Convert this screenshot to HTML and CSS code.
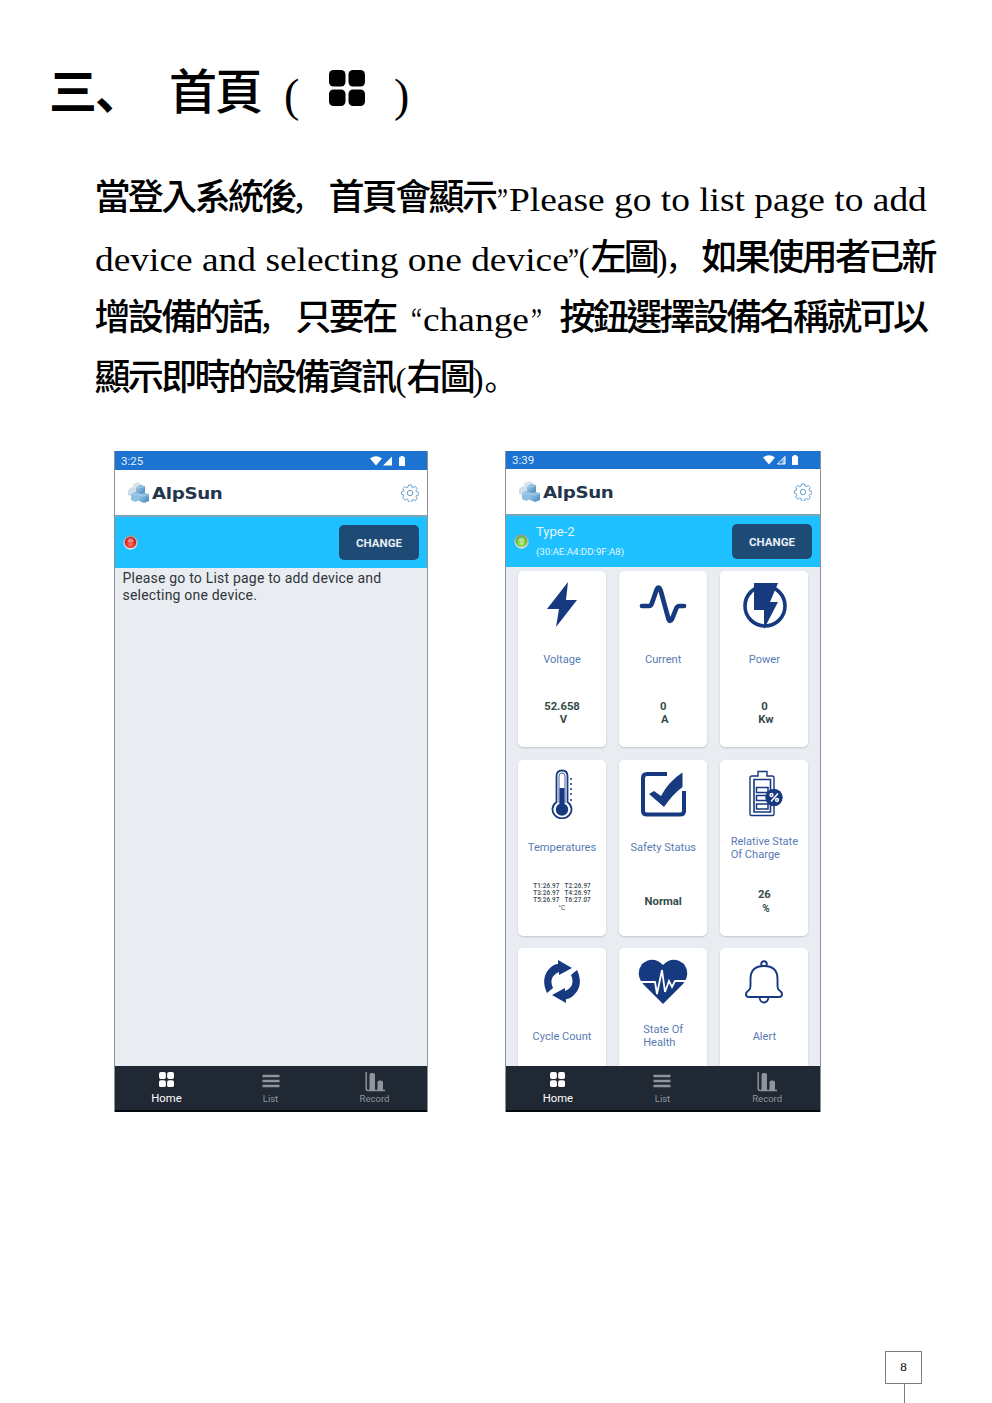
FILE: index.html
```html
<!DOCTYPE html>
<html lang="zh-Hant">
<head>
<meta charset="utf-8">
<title>首頁</title>
<link rel="stylesheet" href="styles.css">
</head>
<body>
<svg class="defs" width="0" height="0">
  <defs>
    <linearGradient id="cube" x1="0" y1="0" x2="1" y2="1"><stop offset="0" stop-color="#a9cfe9"/><stop offset="1" stop-color="#3f86bd"/></linearGradient>
    <radialGradient id="red" cx=".5" cy=".65"><stop offset="0" stop-color="#ff7a6e"/><stop offset="1" stop-color="#d31216"/></radialGradient>
    <radialGradient id="green" cx=".5" cy=".65"><stop offset="0" stop-color="#c6f58a"/><stop offset="1" stop-color="#57b52a"/></radialGradient>
    <linearGradient id="rim" x1="0" y1="0" x2="0" y2="1"><stop offset="0" stop-color="#8a9aa2"/><stop offset="1" stop-color="#e3e8ea"/></linearGradient>
  </defs>
  <symbol id="cubes" viewBox="0 0 22 21">
    <path d="M5 2l5-2 4 2v6l-9 1z" fill="#dbe4eb"/><path d="M0 8l4-3 5 2v6l-4 2-5-2z" fill="#cfdfea"/>
    <path d="M8 5l4-2 5 1v7l-5 2-4-2z" fill="url(#cube)"/><path d="M3 12l4-2 5 2v6l-5 2-4-2z" fill="#8fbfe0"/>
    <path d="M11 13l5-2 5 1v7l-5 2-5-2z" fill="url(#cube)"/>
    <path d="M8 5l4 1 5-2M3 12l4 1 5-1M11 13l5 1 5-2" stroke="#b5d8ee" stroke-width=".7" fill="none"/>
  </symbol>
  <symbol id="gear" viewBox="0 0 18 18">
    <g fill="none" stroke="#68a2d0" stroke-width="1" stroke-linejoin="round">
      <path d="M7.500 1h3l.5 2.200 1.300.5 1.900-1.200 2.100 2.100-1.200 1.900.5 1.300 2.200.5v2.600l-2.200.5-.5 1.300 1.200 1.900-2.100 2.100-1.900-1.200-1.300.5-.5 2.200h-3L7 15.500l-1.300-.5-1.900 1.200-2.100-2.100 1.200-1.900-.5-1.300L.5 10.400V7.800l1.900-.5.5-1.300L1.700 4.600l2.100-2.100 1.900 1.200L7 3.200z"/>
      <circle cx="9" cy="9" r="2.700"/>
    </g>
  </symbol>
  <symbol id="grid" viewBox="0 0 36 36">
    <rect width="16.500" height="16.500" rx="4.500"/><rect x="19.500" width="16.500" height="16.500" rx="4.500"/><rect y="19.500" width="16.500" height="16.500" rx="4.500"/><rect x="19.500" y="19.500" width="16.500" height="16.500" rx="4.500"/>
  </symbol>
  <symbol id="list" viewBox="0 0 18 14"><path d="M.5 2h17M.5 7h17M.5 12h17" stroke="currentColor" stroke-width="2.500"/></symbol>
  <symbol id="bars" viewBox="0 0 20 20"><path d="M1.200 0v16.500q0 2 2 2H20" fill="none" stroke="currentColor" stroke-width="1.500"/><path d="M4.500 18V3q0-2 2-2h1.500q2 0 2 2v15zM12.500 18v-7.500q0-2 2-2H16q2 0 2 2V18z" fill="currentColor"/></symbol>
</svg>

<main class="page">
  <h1 class="title">
    <span class="num" lang="zh-Hans">三、</span><span class="name">首頁</span><span class="open">(</span>
    <svg class="title-icon"><use href="#grid"/></svg><span class="close">)</span>
  </h1>

  <div class="intro">
    <p class="line"><span class="han w201">當登入系統後</span><span class="stop w33" lang="zh-Hans">，</span><span class="han w168">首頁會顯示</span><span class="lat quote slim w12">”</span><span class="lat">Please go to list page to add</span></p>
    <p class="line"><span class="lat w473">device and selecting one device</span><span class="lat quote slim w11">”</span><span class="lat quote w12">(</span><span class="han w66">左圖</span><span class="lat quote w9">)</span><span class="stop near w36" lang="zh-Hans">，</span><span class="han">如果使用者已新</span></p>
    <p class="line"><span class="han w168">增設備的話</span><span class="stop w33" lang="zh-Hans">，</span><span class="han w115">只要在</span><span class="lat quote slim w12">“</span><span class="lat w108">change</span><span class="lat quote slim w30">”</span><span class="han">按鈕選擇設備名稱就可以</span></p>
    <p class="line"><span class="han w301">顯示即時的設備資訊</span><span class="lat quote w11">(</span><span class="han w66">右圖</span><span class="lat quote w12">)</span><span class="stop near" lang="zh-Hans">。</span></p>
  </div>

  <div class="phones">
    <section class="phone left">
      <div class="status"><span>3:25</span>
        <svg width="36" height="10" viewBox="0 0 36 10"><path d="M0 2.500Q6-2 12 2.500L6 9.500zM13 9.500l9-9v9zM29 1.200h1.500V0h3v1.200H35v8.800h-6z" fill="#fff"/></svg></div>
      <header class="brand"><svg width="22" height="21"><use href="#cubes"/></svg><span class="logo">AlpSun</span><svg class="gear" width="18" height="18"><use href="#gear"/></svg></header>
      <div class="device"><svg width="15" height="15" viewBox="0 0 15 15"><circle cx="7.500" cy="7.500" r="7.200" fill="url(#rim)"/><circle cx="7.500" cy="7.500" r="5.600" fill="url(#red)"/><path d="M4.500 4.500q3-2.500 6 0V7h-6z" fill="#fff" opacity=".4"/></svg><span class="change">CHANGE</span></div>
      <p class="message">Please go to List page to add device and<br>selecting one device.</p>
      <nav class="tabs"><span class="tab on"><svg width="15" height="15"><use href="#grid"/></svg>Home</span><span class="tab"><svg class="lines" width="18" height="14"><use href="#list"/></svg>List</span><span class="tab"><svg width="20" height="20"><use href="#bars"/></svg>Record</span></nav>
    </section>

    <section class="phone right">
      <div class="status"><span>3:39</span>
        <svg width="36" height="10" viewBox="0 0 36 10"><path d="M0 2.500Q6-2 12 2.500L6 9.500zM29 1.200h1.500V0h3v1.200H35v8.800h-6z" fill="#fff"/><path d="M14.500 9l7.500-7.500V9z" fill="none" stroke="#fff"/><path d="M19 4.500L22 1.500V9h-3z" fill="#fff" opacity=".5"/></svg></div>
      <header class="brand"><svg width="22" height="21"><use href="#cubes"/></svg><span class="logo">AlpSun</span><svg class="gear" width="18" height="18"><use href="#gear"/></svg></header>
      <div class="device"><svg width="15" height="15" viewBox="0 0 15 15"><circle cx="7.500" cy="7.500" r="7.200" fill="url(#rim)"/><circle cx="7.500" cy="7.500" r="5.600" fill="url(#green)"/><path d="M4.500 4.500q3-2.500 6 0V7h-6z" fill="#fff" opacity=".4"/></svg><span class="info"><span class="type">Type-2</span><span class="mac">(30:AE:A4:DD:9F:A8)</span></span><span class="change">CHANGE</span></div>
      <div class="cards">
        <article class="card"><div class="icon"><svg width="50" height="50" viewBox="0 0 50 50"><path d="M31 2L10 29h12l-3 18 21-27H29z" fill="#16397f"/></svg></div><div class="label">Voltage</div><div class="value"><span>52.658</span><span class="unit">V</span></div></article>
        <article class="card"><div class="icon"><svg width="50" height="50" viewBox="0 0 50 50"><path d="M4 26h7q2 0 3-3l4.500-13q2-5 4 0l8 29q1.500 4 3.500 0l4-10q1-3 3.500-3H46" fill="none" stroke="#16397f" stroke-width="4.700" stroke-linecap="round"/></svg></div><div class="label">Current</div><div class="value"><span>0</span><span class="unit">A</span></div></article>
        <article class="card"><div class="icon"><svg width="50" height="50" viewBox="0 0 50 50"><circle cx="26" cy="26" r="20" fill="none" stroke="#16397f" stroke-width="3.600"/><path d="M15 3h24l-8 19h8L25 49V30H15z" fill="#16397f"/></svg></div><div class="label">Power</div><div class="value"><span>0</span><span class="unit">Kw</span></div></article>
        <article class="card"><div class="icon"><svg width="50" height="50" viewBox="0 0 50 50"><g fill="none" stroke="#16397f"><path d="M19.500 33V7q0-5.500 5.500-5.500T30.500 7v26A9.500 9 0 1 1 19.500 33z" stroke-width="1.800"/><path d="M22 34V7q0-3 3-3t3 3v27" stroke-width=".8"/><path d="M25 19v21" stroke-width="5"/><path d="M33 10h2M33 15h2M33 20h2M33 25h2M33 31h2" stroke-width="1.500"/></g><circle cx="25" cy="40.500" r="6.200" fill="#16397f"/></svg></div><div class="label">Temperatures</div><div class="value temps"><span>T1:26.97&nbsp;&nbsp; T2:26.97</span><span>T3:26.97&nbsp;&nbsp; T4:26.97</span><span>T5:26.97&nbsp;&nbsp; T6:27.07</span><span class="deg">°C</span></div></article>
        <article class="card"><div class="icon"><svg width="50" height="50" viewBox="0 0 50 50"><path d="M29 5H9Q5 5 5 9v33q0 3.500 4 3.500h33q4 0 4-3.500V22" fill="none" stroke="#16397f" stroke-width="4"/><path d="M11 25l5-3 7 5Q31 12 44.500 3.500V18Q35 25 26 38z" fill="#16397f"/></svg></div><div class="label">Safety Status</div><div class="value"><span>Normal</span></div></article>
        <article class="card"><div class="icon"><svg width="50" height="50" viewBox="0 0 50 50"><g fill="none" stroke="#16397f"><path d="M19 7V2.500h9V7h5q2 0 2 2v36q0 1.500-1.500 1.500h-21Q11 46.500 11 45V9q0-2 2-2z" stroke-width="1.400"/><path d="M15 10.500h16.500V43H15z" stroke-width="1.600"/><path d="M17.500 18.500H29v5H17.500zM17.500 26.500H29v5H17.500zM17.500 35H29v5H17.500z" stroke-width="1.500"/></g><circle cx="35" cy="28.500" r="8.700" fill="#16397f"/><g fill="none" stroke="#fff" stroke-width="1.500"><path d="M32 32.500l7-8"/><circle cx="32.500" cy="26" r="1.400"/><circle cx="38" cy="31" r="1.400"/></g></svg></div><div class="label two">Relative State<br>Of Charge</div><div class="value"><span>26</span><span class="unit percent">%</span></div></article>
        <article class="card"><div class="icon"><svg width="50" height="50" viewBox="0 0 50 50"><g fill="#16397f"><path id="turn" d="M10 36Q3 21 13 11q4-4 8-4V3l14 8-13 7v-3Q11 20 16 31z"/><use href="#turn" transform="rotate(180 25 24.500)"/></g></svg></div><div class="label">Cycle Count</div></article>
        <article class="card"><div class="icon"><svg width="50" height="50" viewBox="0 0 50 50"><path d="M25 47L5 27Q-3 17 4 7 15-2 25 8 35-2 46 7 53 17 45 27z" fill="#16397f"/><path d="M1 25h16l2 12 5-24 3 22 4-11 3 6 3-6h12" fill="none" stroke="#fff" stroke-width="1.800"/></svg></div><div class="label two">State Of<br>Health</div></article>
        <article class="card"><div class="icon"><svg width="50" height="50" viewBox="0 0 50 50"><g fill="#fff" stroke="#16397f" stroke-width="1.900"><circle cx="25" cy="7" r="2.800"/><path d="M20.500 40a4.500 5.500 0 0 0 9 0z"/><path d="M10 40q-3 0-3-2.800 0-2.200 3-4.200 1.500-1 1.500-5.500V22q0-13 13.500-13t13.500 13v5.500q0 4.500 1.500 5.500 3 2 3 4.200 0 2.800-3 2.800z"/></g></svg></div><div class="label">Alert</div></article>
      </div>
      <nav class="tabs"><span class="tab on"><svg width="15" height="15"><use href="#grid"/></svg>Home</span><span class="tab"><svg class="lines" width="18" height="14"><use href="#list"/></svg>List</span><span class="tab"><svg width="20" height="20"><use href="#bars"/></svg>Record</span></nav>
    </section>
  </div>

  <footer class="folio"><span class="number">8</span><span class="stem"></span></footer>
</main>
</body>
</html>
```
FILE: styles.css
```css
* { box-sizing: border-box; }
body { margin: 0; background: #fff; color: #000; }
p, h1 { margin: 0; }
svg { display: block; flex: none; }
.defs { position: absolute; }
.page { display: flex; flex-direction: column; width: 992px; height: 1403px; overflow: hidden; }

.title { display: flex; height: 167px; padding: 53px 0 0 49px; font: 400 48px/70px "Noto Sans CJK TC", sans-serif; letter-spacing: -2px; }
.title span { flex: none; white-space: nowrap; }
.title .num { width: 120px; font-family: "Noto Sans CJK SC", sans-serif; font-weight: 700; }
.title .name { width: 115px; font-weight: 500; }
.title .open, .title .close { font-family: "Liberation Serif", serif; font-size: 46px; line-height: 86px; }
.title .open { width: 45px; }
.title-icon { width: 36px; height: 36px; margin-top: 17px; }
.title .close { margin-left: 29px; }

.intro { height: 284px; padding-left: 94.500px; }
.line { display: flex; height: 60px; }
.line span { flex: none; white-space: nowrap; }
.han { font: 500 36px/54px "Noto Sans CJK TC", sans-serif; letter-spacing: -2.650px; }
.stop { font: 400 32px/58px "Noto Sans CJK SC", sans-serif; text-indent: -4px; }
.stop.near { text-indent: 0; }
.lat { font: 400 33px/66px "Liberation Serif", "Times New Roman", serif; transform: scaleX(1.134); transform-origin: 0 0; }
.lat.quote { transform: none; }
.lat.quote.slim { transform: scaleX(.74); }
.w9 { width: 9px; } .w11 { width: 11px; } .w12 { width: 12px; }
.w30 { width: 29px; } .w33 { width: 33px; } .w36 { width: 36px; } .w66 { width: 66px; }
.w108 { width: 108px; } .w115 { width: 115px; } .w168 { width: 168px; } .w201 { width: 201px; }
.w301 { width: 301px; } .w473 { width: 473px; }

.phones { display: flex; gap: 77px; height: 661px; padding-left: 114px; font-family: Roboto, sans-serif; }
.phone { display: flex; flex-direction: column; height: 661px; background: #e9edf1; border: solid #8c9298; border-width: 0 1px; overflow: hidden; }
.left { width: 314px; }
.right { width: 316px; }
.status { display: flex; justify-content: space-between; align-items: center; height: 18px; padding: 0 21px 0 6px; background: #1c73d1; color: #e5effa; font-size: 11.500px; }
.left .status { height: 19px; padding-top: 1px; }
.brand { display: flex; align-items: center; height: 47px; padding: 0 8px 0 13px; background: #fff; border-bottom: 2px solid #7da5b7; }
.logo { width: 80px; margin: 2px 0 0 2px; color: #22354a; font: 700 16px/20px "DejaVu Sans", sans-serif; letter-spacing: -.3px; transform: scaleX(1.140); transform-origin: 0 0; }
.gear { margin-left: auto; }
.device { display: flex; align-items: center; height: 51px; padding: 0 8px; background: #1fc0ff; }
.info { display: flex; flex-direction: column; margin-left: 7px; color: #e4f7ff; }
.type { font-size: 13px; line-height: 20px; }
.mac { font-size: 9.700px; line-height: 19px; }
.change { width: 80px; height: 35px; margin-left: auto; border-radius: 5px; background: #1e4b75; color: #e8eef4; font-size: 11.500px; font-weight: 700; line-height: 36px; text-align: center; }
.message { flex: 1; padding: 2px 7.500px; color: #30343a; font-size: 14px; line-height: 17px; letter-spacing: .2px; white-space: nowrap; }

.cards { display: grid; flex: 1; grid-template-columns: repeat(3, 88px); grid-auto-rows: 176px; gap: 12.500px 13.200px; min-height: 0; padding: 4px 12px 0; overflow: hidden; }
.card { display: flex; flex-direction: column; align-items: center; border-radius: 5px; background: #fff; box-shadow: 0 1px 2px #bfc6cc; }
.icon { display: flex; align-items: center; height: 68px; }
.label { display: flex; align-items: center; height: 40px; color: #587bb4; font-size: 11.100px; line-height: 13px; white-space: nowrap; }
.value { display: flex; flex: 1; flex-direction: column; align-items: center; justify-content: center; color: #354b4b; font-size: 11.300px; font-weight: 700; line-height: 13.500px; white-space: nowrap; }
.unit { padding-left: 3px; }
.percent { font-size: 10px; }
.value.temps { flex: none; justify-content: flex-start; padding-top: 15px; font-size: 6.300px; font-weight: 500; line-height: 7.400px; letter-spacing: .15px; }
.deg { font-weight: 400; }

.tabs { display: grid; grid-template-columns: repeat(3, 1fr); flex: none; height: 46px; background: #202833; border-bottom: 2px solid #05080c; }
.tab { display: flex; flex-direction: column; align-items: center; height: 39px; padding: 6px 1px 0 0; color: #8f959d; font-size: 9.500px; line-height: 13px; }
.tab svg { margin-bottom: auto; fill: currentColor; }
.tab .lines { margin-top: 2px; }
.tab.on { color: #fff; font-size: 11.300px; }

.folio { display: flex; flex-direction: column; align-items: center; width: 37px; margin: 239px 0 0 885px; }
.number { width: 37px; height: 33px; border: 1px solid #7f7f7f; font: 400 13px/30px "Liberation Serif", serif; text-align: center; }
.stem { width: 1px; height: 19px; margin-left: 2px; background: #7f7f7f; }
```
